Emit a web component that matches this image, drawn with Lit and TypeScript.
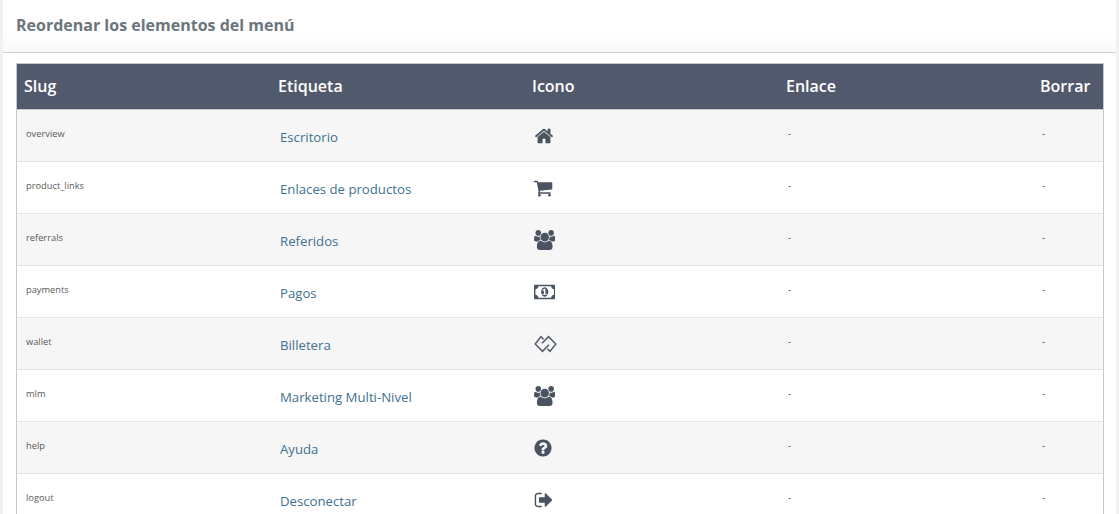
import { LitElement, html, css, svg } from "lit";
import { customElement } from "lit/decorators.js";

const ICONS: Record<string, { w: number; d: string }> = {
  home: { w: 1792, d: "M1472 992v480q0 26-19 45t-45 19h-384v-384h-256v384h-384q-26 0-45-19t-19-45v-480q0-1 .5-3t.5-3l575-474 575 474q1 2 1 6zm223-69l-62 74q-8 9-21 11h-3q-13 0-21-7l-692-577-692 577q-12 8-24 7-13-2-21-11l-62-74q-8-10-7-23.500t11-21.500l719-599q32-26 76-26t76 26l244 204v-195q0-14 9-23t23-9h192q14 0 23 9t9 23v408l219 182q10 8 11 21.500t-7 23.500z" },
  cart: { w: 1792, d: "M704 1536q0 52-38 90t-90 38-90-38-38-90 38-90 90-38 90 38 38 90zm896 0q0 52-38 90t-90 38-90-38-38-90 38-90 90-38 90 38 38 90zm128-1088v512q0 24-16.500 42.500t-40.500 21.500l-1044 122q13 60 13 70 0 16-24 64h920q26 0 45 19t19 45-19 45-45 19h-1024q-26 0-45-19t-19-45q0-11 8-31.500t16-36 21.500-40 15.500-29.500l-177-823h-204q-26 0-45-19t-19-45 19-45 45-19h256q16 0 28.500 6.500t19.500 15.500 13 24.500 8 26 5.500 29.500 4.500 26h1201q26 0 45 19t19 45z" },
  users: { w: 1920, d: "M593 896q-162 5-265 128h-134q-82 0-138-40.500t-56-118.500q0-353 124-353 6 0 43.500 21t97.500 42.500 119 21.500q67 0 133-23-5 37-5 66 0 139 81 256zm1071 637q0 120-73 189.500t-194 69.500h-874q-121 0-194-69.500t-73-189.500q0-53 3.500-103.500t14-109 26.500-108.500 43-97.500 62-81 85.500-53.500 111.500-20q10 0 43 21.500t73 48 107 48 135 21.500 135-21.500 107-48 73-48 43-21.500q61 0 111.500 20t85.500 53.500 62 81 43 97.500 26.500 108.500 14 109 3.500 103.500zm-1024-1277q0 106-75 181t-181 75-181-75-75-181 75-181 181-75 181 75 75 181zm704 384q0 159-112.500 271.500t-271.500 112.500-271.500-112.500-112.500-271.500 112.500-271.500 271.500-112.500 271.500 112.500 112.500 271.500zm576 225q0 78-56 118.500t-138 40.500h-134q-103-123-265-128 81-117 81-256 0-29-5-66 66 23 133 23 59 0 119-21.500t97.500-42.500 43.500-21q124 0 124 353zm-128-609q0 106-75 181t-181 75-181-75-75-181 75-181 181-75 181 75 75 181z" },
  money: { w: 1920, d: "M768 1152h384v-96h-128v-448h-114l-148 137 77 80q42-37 55-57h2v288h-128v96zm512-256q0 70-21 142t-59.500 134-101.500 101-138 39-138-39-101.500-101-59.500-134-21-142 21-142 59.500-134 101.500-101 138-39 138 39 101.500 101 59.500 134 21 142zm512 256v-512q-106 0-181-75t-75-181h-1152q0 106-75 181t-181 75v512q106 0 181 75t75 181h1152q0-106 75-181t181-75zm128-832v1152q0 26-19 45t-45 19h-1792q-26 0-45-19t-19-45v-1152q0-26 19-45t45-19h1792q26 0 45 19t19 45z" },
  help: { w: 1792, d: "M1024 1376v-192q0-14-9-23t-23-9h-192q-14 0-23 9t-9 23v192q0 14 9 23t23 9h192q14 0 23-9t9-23zm256-672q0-88-55.500-163t-138.500-116-170-41q-243 0-371 213-15 24 8 42l132 100q7 6 19 6 16 0 25-12 53-68 86-92 34-24 86-24 48 0 85.500 26t37.500 59q0 38-20 61t-68 45q-63 28-115.500 86.500t-52.500 125.500v36q0 14 9 23t23 9h192q14 0 23-9t9-23q0-19 21.500-49.500t54.500-49.500q32-18 49-28.500t46-35 44.500-48 28-60.500 12.500-81zm384 192q0 209-103 385.500t-279.500 279.500-385.500 103-385.500-103-279.500-279.500-103-385.500 103-385.500 279.500-279.500 385.500-103 385.500 103 279.500 279.500 103 385.500z" },
  logout: { w: 1664, d: "M704 1440q0 4 1 20t.5 26.500-3 23.500-10 19.500-20.500 6.500h-320q-119 0-203.500-84.500t-84.500-203.500v-704q0-119 84.500-203.500t203.500-84.500h320q13 0 22.500 9.500t9.500 22.500q0 4 1 20t.5 26.500-3 23.500-10 19.500-20.500 6.500h-320q-66 0-113 47t-47 113v704q0 66 47 113t113 47h312l11.500 1 11.500 3 8 5.500 7 9 2 13.500zm928-544q0 26-19 45l-544 544q-19 19-45 19t-45-19-19-45v-288h-448q-26 0-45-19t-19-45v-384q0-26 19-45t45-19h448v-288q0-26 19-45t45-19 45 19l544 544q19 19 19 45z" },
};

const icon = (name: string) => {
  if (name === "gg") {
    return html`<svg class="ic" viewBox="534 335 23 18" width="23" height="18">
      ${svg`<path d="M543.600 339.200 L541 336.600 L535.200 344 L542.500 351.400 L549 344.800" fill="none" stroke="#555d6b" stroke-width="1.500"/>
      <path d="M547.400 348.800 L550 351.400 L555.800 344 L548.500 336.600 L542 343.200" fill="none" stroke="#555d6b" stroke-width="1.500"/>`}
    </svg>`;
  }
  const i = ICONS[name];
  const h = 20;
  return html`<svg class="ic ${name}" viewBox="0 0 ${i.w} 1792" width=${(i.w / 1792) * h} height=${h}>
    ${svg`<path d=${i.d} fill="#4a5361"/>`}
  </svg>`;
};

const ROWS = [
  ["overview", "Escritorio", "home"],
  ["product_links", "Enlaces de productos", "cart"],
  ["referrals", "Referidos", "users"],
  ["payments", "Pagos", "money"],
  ["wallet", "Billetera", "gg"],
  ["mlm", "Marketing Multi-Nivel", "users"],
  ["help", "Ayuda", "help"],
  ["logout", "Desconectar", "logout"],
];

@customElement("app-root")
export class AppRoot extends LitElement {
  static styles = css`
    :host {
      display: block;
      height: 514px;
      overflow: hidden;
      background: #f1f1f1;
      font-family: "Open Sans", sans-serif;
      padding: 0 3px;
      box-sizing: border-box;
    }
    .card { background: #fff; height: 100%; }
    .head {
      height: 53px;
      box-sizing: border-box;
      border-bottom: 1px solid #d2d2d2;
      padding: 0 13px;
      display: flex;
      align-items: center;
      background: linear-gradient(#fff 60%, #f9f9f9);
    }
    h2 {
      margin: 0 0 2px;
      font-size: 16px;
      font-weight: 700;
      color: #6c757d;
    }
    .wrap { padding: 10px 12px 0 13px; }
    .table {
      border: 1px solid #c8c8c8;
      border-bottom: none;
    }
    .row {
      display: grid;
      grid-template-columns: 254px 254px 254px 254px 1fr;
      height: 52px;
      box-sizing: border-box;
      border-bottom: 1px solid #e6e6e6;
      background: #fff;
    }
    .row.odd { background: #f6f6f6; }
    .row.th {
      height: 46px;
      padding-bottom: 2px;
      background: #515a6c;
      border-bottom: 1px solid #c8c8c8;
      align-items: center;
      color: #fff;
      font-size: 16px;
      font-weight: 600;
    }
    .th > div { padding-left: 7px; }
    .slug {
      padding: 17px 0 0 9px;
      font-size: 9.3px;
      line-height: 14px;
      color: #5a5a5a;
    }
    .label {
      padding: 18px 0 0 9px;
      font-size: 13.2px;
      line-height: 18px;
    }
    .label a { color: #3f7190; text-decoration: none; }
    .icon {
      padding-left: 9px;
      display: flex;
      align-items: center;
      height: 52px;
    }
    .ic { display: block; }
    .ic.cart, .ic.help { margin-left: -1px; }
    .dash {
      padding: 17px 0 0 9px;
      font-size: 9.3px;
      line-height: 14px;
      color: #333;
    }
  `;

  render() {
    return html`<div class="card">
      <div class="head"><h2>Reordenar los elementos del menú</h2></div>
      <div class="wrap">
        <div class="table">
          <div class="row th">
            <div>Slug</div><div>Etiqueta</div><div>Icono</div><div>Enlace</div><div>Borrar</div>
          </div>
          ${ROWS.map(
            (r, i) => html`<div class="row ${i % 2 === 0 ? "odd" : ""}">
              <div class="slug">${r[0]}</div>
              <div class="label"><a href="#">${r[1]}</a></div>
              <div class="icon">${icon(r[2])}</div>
              <div class="dash">-</div>
              <div class="dash">-</div>
            </div>`
          )}
        </div>
      </div>
    </div>`;
  }
}
